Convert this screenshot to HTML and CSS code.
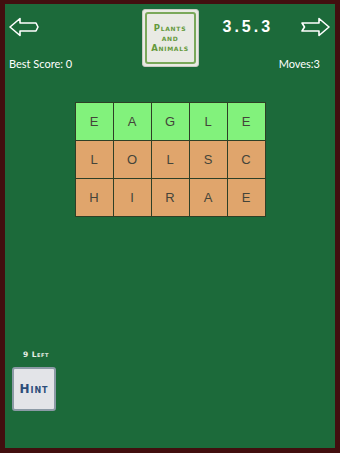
FILE: index.html
```html
<!DOCTYPE html>
<html lang="en">
<head>
  <meta charset="UTF-8" />
  <meta name="viewport" content="width=device-width, initial-scale=1.0"/>
  <title>Word Puzzle</title>
  <link rel="stylesheet" href="styles.css">
</head>
<body>
<div class="frame">
  <div class="header">
    <div class="side left-side">
      <svg class="arrow" width="30" height="20" viewBox="0 0 30 20">
        <path d="M1 10 L11 1.5 L11 6 L27 6 L29 10 L27 14 L11 14 L11 18.5 Z" fill="none" stroke="#fff" stroke-width="1.6" stroke-linejoin="round"/>
      </svg>
      <div class="stat">Best Score: 0</div>
    </div>
    <div class="category">
      <div class="category-inner">Plants<br>and<br>Animals</div>
    </div>
    <div class="side right-side">
      <div class="top-row">
        <span class="level">3.5.3</span>
        <svg class="arrow" width="30" height="20" viewBox="0 0 30 20">
          <path d="M29 10 L19 1.5 L19 6 L2 6 L4.5 10 L2 14 L19 14 L19 18.5 Z" fill="none" stroke="#fff" stroke-width="1.6" stroke-linejoin="round"/>
        </svg>
      </div>
      <div class="stat moves">Moves:3</div>
    </div>
  </div>

  <div class="grid">
    <div class="tile done">E</div>
    <div class="tile done">A</div>
    <div class="tile done">G</div>
    <div class="tile done">L</div>
    <div class="tile done">E</div>
    <div class="tile">L</div>
    <div class="tile">O</div>
    <div class="tile">L</div>
    <div class="tile">S</div>
    <div class="tile">C</div>
    <div class="tile">H</div>
    <div class="tile">I</div>
    <div class="tile">R</div>
    <div class="tile">A</div>
    <div class="tile">E</div>
  </div>

  <div class="footer">
    <div class="hints-left">9 Left</div>
    <button class="hint-button">Hint</button>
  </div>
</div>
</body>
</html>
```

FILE: styles.css
```css
html, body {
  margin: 0;
  padding: 0;
}
.frame {
  width: 340px;
  height: 453px;
  box-sizing: border-box;
  border-style: solid;
  border-color: #420f0f;
  border-width: 4px 5px 5px 5px;
  background-color: #1c6a3a;
  display: flex;
  flex-direction: column;
  font-family: "Lato", "Liberation Sans", sans-serif;
  color: #fff;
}
.header {
  display: grid;
  grid-template-columns: 1fr 57px 1fr;
  padding-top: 5px;
}
.side {
  display: flex;
  flex-direction: column;
  justify-content: space-between;
}
.left-side {
  padding-left: 4px;
}
.left-side .arrow {
  margin-top: 8px;
}
.right-side {
  padding-right: 5px;
}
.top-row {
  display: flex;
  justify-content: space-between;
  align-items: center;
  padding-left: 24px;
  margin-top: 8px;
}
.level {
  font-family: "Liberation Sans", sans-serif;
  font-weight: bold;
  font-size: 16px;
  letter-spacing: 3px;
}
.stat {
  font-size: 11px;
  margin-bottom: -3px;
}
.moves {
  text-align: right;
  padding-right: 10px;
}
.category {
  height: 58px;
  box-sizing: border-box;
  background-color: #e9eae4;
  border: 1px solid #c9cbc2;
  border-radius: 3px;
  padding: 2px;
}
.category-inner {
  height: 100%;
  box-sizing: border-box;
  border: 2px solid #7aa85a;
  border-radius: 3px;
  display: flex;
  align-items: center;
  justify-content: center;
  text-align: center;
  font-family: "DejaVu Sans", sans-serif;
  font-variant: small-caps;
  font-weight: bold;
  font-size: 8.5px;
  line-height: 10px;
  letter-spacing: 0.7px;
  color: #64993a;
}
.grid {
  align-self: center;
  margin-top: 36px;
  display: grid;
  grid-template-columns: repeat(5, 37px);
  grid-auto-rows: 37px;
  gap: 1px;
  background-color: #2e3f26;
  box-shadow: 0 0 0 1px #2e3f26;
}
.tile {
  background-color: #e0a56c;
  display: flex;
  align-items: center;
  justify-content: center;
  font-family: "Liberation Sans", sans-serif;
  font-size: 13px;
  color: #44443a;
}
.tile.done {
  background-color: #82f27c;
}
.footer {
  margin-top: auto;
  padding: 0 0 37px 7px;
  display: flex;
  flex-direction: column;
  align-items: flex-start;
}
.hints-left {
  font-family: "DejaVu Sans", sans-serif;
  font-variant: small-caps;
  font-weight: bold;
  font-size: 7.5px;
  letter-spacing: 0.5px;
  color: #e8efe6;
  margin: 0 0 8px 11px;
}
.hint-button {
  width: 44px;
  height: 44px;
  box-sizing: border-box;
  background-color: #e3e4e8;
  border: 2px solid #8c9aa6;
  border-radius: 3px;
  padding: 0;
  font-family: "DejaVu Sans", sans-serif;
  font-variant: small-caps;
  font-weight: bold;
  font-size: 12px;
  letter-spacing: 1px;
  color: #2c4d7a;
}
```
